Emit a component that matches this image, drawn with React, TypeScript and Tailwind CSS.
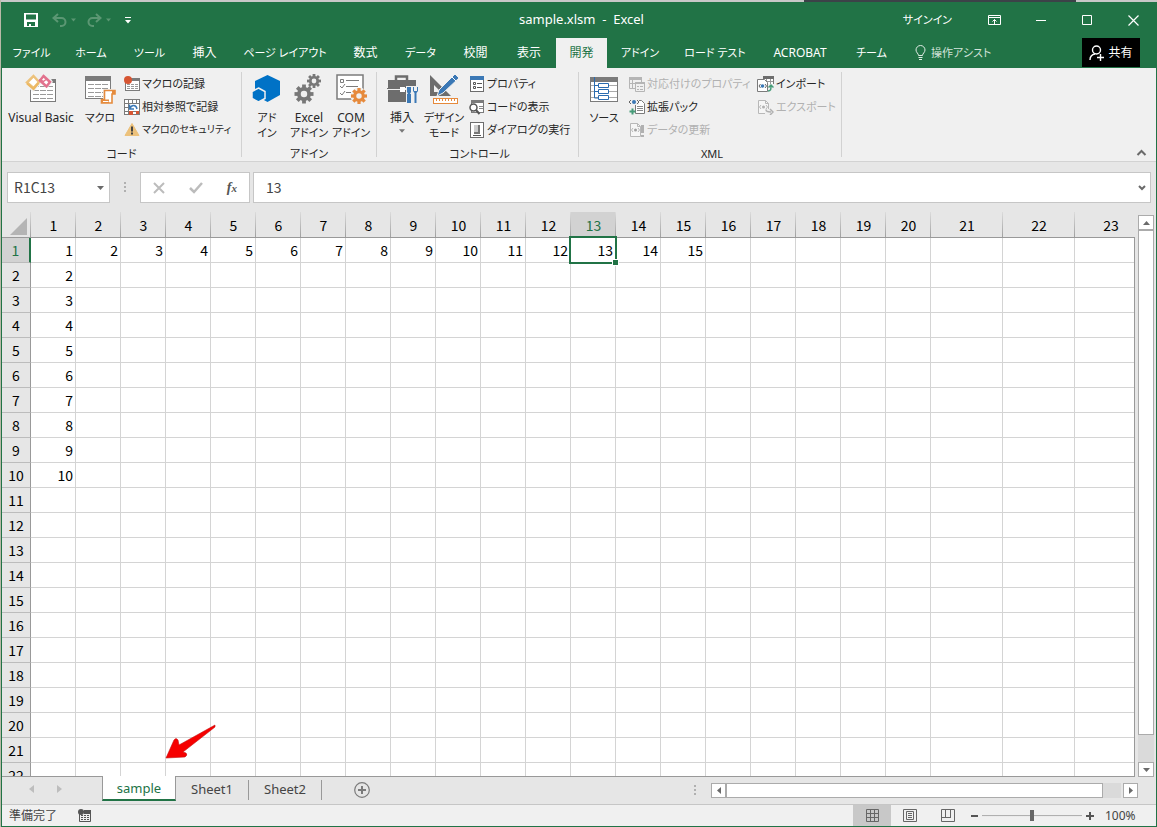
import { useState, type ReactNode } from "react";

type SmallButtonProps = {
  icon: ReactNode;
  label: string;
  disabled?: boolean;
  small?: boolean;
};

type BigButtonProps = {
  icon: ReactNode;
  lines: string[];
  className: string;
  caret?: boolean;
};

const TABS = [
  { label: "ファイル", width: "w-[59px] text-[11px]" },
  { label: "ホーム", width: "w-[60px] text-[11px]" },
  { label: "ツール", width: "w-[57px] text-[11px]" },
  { label: "挿入", width: "w-[53px]" },
  { label: "ページ レイアウト", width: "w-[108px] text-[11px]" },
  { label: "数式", width: "w-[53px]" },
  { label: "データ", width: "w-[57px] text-[11px]" },
  { label: "校閲", width: "w-[53px]" },
  { label: "表示", width: "w-[54px]" },
  { label: "開発", width: "w-[51px]" },
  { label: "アドイン", width: "w-[66px] text-[11px]" },
  { label: "ロード テスト", width: "w-[84px] text-[11px]" },
  { label: "ACROBAT", width: "w-[86px]" },
  { label: "チーム", width: "w-[57px] text-[11px]" },
];

const COLUMNS = Array.from({ length: 23 }, (_, i) => i + 1);
const ROWS = Array.from({ length: 22 }, (_, i) => i + 1);
const SHEETS = ["sample", "Sheet1", "Sheet2"];

function cellValue(row: number, col: number) {
  if (row === 1 && col <= 15) return col;
  if (col === 1 && row <= 10) return row;
  return "";
}

/* ---------- icons ---------- */

function SaveIcon() {
  return (
    <svg width="14" height="14" viewBox="0 0 14 14">
      <path fill="#fff" fillRule="evenodd" d="M0 0h14v14H0zM2 1.500v5h10v-5zM3 9v4h2v-2h2v2h4V9z" />
    </svg>
  );
}

function UndoIcon({ flip }: { flip?: boolean }) {
  return (
    <svg width="15" height="14" viewBox="0 0 15 14" className={flip ? "-scale-x-100" : ""}>
      <path d="M6 1 1.500 5 6 9M2 5h7.500a4 4 0 0 1 0 8H8" fill="none" stroke="#5b9773" strokeWidth="2" />
    </svg>
  );
}

function Caret({ className }: { className: string }) {
  return (
    <svg width="7" height="4" viewBox="0 0 7 4" className={className}>
      <path d="M0 0h7L3.500 4z" fill="currentColor" />
    </svg>
  );
}

function SheetLines({ x, y, w, h, head = 4 }: { x: number; y: number; w: number; h: number; head?: number }) {
  const rows = Math.floor((h - head - 2) / 4);
  return (
    <g>
      <rect x={x + 0.5} y={y + 0.5} width={w - 1} height={h - 1} fill="#fff" stroke="#7b7b7b" />
      <rect x={x} y={y} width={w} height={head} fill="#7b7b7b" />
      {Array.from({ length: rows }, (_, i) => (
        <path
          key={i}
          d={`M${x + 3} ${y + head + 3.5 + i * 4}h${w - 6}`}
          stroke="#9a9a9a"
          strokeDasharray="6 1"
        />
      ))}
    </g>
  );
}

function VisualBasicIcon() {
  return (
    <svg width="32" height="32" viewBox="0 0 32 32">
      <SheetLines x={5} y={5} w={26} h={23} />
      <path d="m8 0 8 7 7-7 5 8-6 6-6-4-8 8-8-7z" fill="#f0f0f0" />
      <path d="m8.500 2 5.500 6-5.500 6L2 8.500z" fill="#fff" stroke="#edc27b" strokeWidth="2.500" />
      <path d="M2 9.500 8.500 15l5-6" stroke="#edb862" strokeWidth="2" fill="none" />
      <path d="m18.500 2 6.500 6-3.500 4.500L15 6.500z" fill="#fff" stroke="#e2728e" strokeWidth="2.500" />
      <path d="m15 6 3.500 1.500 2.500-2" stroke="#e2728e" strokeWidth="1.500" fill="none" />
    </svg>
  );
}

function MacroIcon() {
  return (
    <svg width="32" height="32" viewBox="0 0 32 32">
      <SheetLines x={1} y={2} w={26} h={23} head={5} />
      <path d="M19 15h13v6h-3v10H16v-6h3z" fill="#f0f0f0" />
      <path d="M20.500 16.500H31v3.500h-3v9H17.500v-3.500h3z" fill="#fff" stroke="#e58b3d" strokeWidth="1.600" />
      <path d="M17.500 25.500H25V29h-7.500zM28 16.500h3V20h-3z" fill="#e58b3d" />
      <path d="M19 27.500h5.500" stroke="#fff" />
    </svg>
  );
}

function RecordIcon() {
  return (
    <svg width="16" height="16" viewBox="0 0 16 16">
      <rect x="1.500" y="2.500" width="14" height="12" fill="#fff" stroke="#7b7b7b" />
      <path d="M6 2h10v3H6z" fill="#7b7b7b" />
      <path d="M3 8.500h11M3 10.500h11M3 12.500h11" stroke="#999" strokeDasharray="3 1" />
      <circle cx="4" cy="4" r="4" fill="#d65532" />
    </svg>
  );
}

function RelativeIcon() {
  return (
    <svg width="16" height="16" viewBox="0 0 16 16">
      <rect x=".5" y=".5" width="15" height="15" fill="#fff" stroke="#7b7b7b" />
      <path d="M0 4.500h16M4.500 0v16M8.500 0v4M12.500 0v4M0 8.500h4M0 12.500h16M8.500 12v4" stroke="#7b7b7b" />
      <path d="M5 5h10v7H5z" fill="#fff" />
      <path d="M6 9.500C7 6 12 5 13 10M5.500 5.500v4.500H10" fill="none" stroke="#3b78b5" strokeWidth="1.500" />
      <path d="M5 12h4v4H5zM12 12h3v3h-3z" fill="#d65532" />
    </svg>
  );
}

function WarningIcon() {
  return (
    <svg width="16" height="16" viewBox="0 0 16 16">
      <path d="M8 1.500 15 13.500H1z" fill="#ecc17b" stroke="#ecc17b" strokeLinejoin="round" />
      <path d="M7 4.500h2v5H7zM7 10.500h2v2H7z" fill="#444" />
    </svg>
  );
}

function AddinIcon() {
  return (
    <svg width="32" height="32" viewBox="0 0 32 32">
      <path d="M16.500 1 29 7v14l-12.500 7L4 21V7z" fill="#0072c6" />
      <path d="M7.500 14 14 17.500v7L7.500 28 1 24.500v-7z" fill="#0072c6" stroke="#f0f0f0" strokeWidth="1.500" />
    </svg>
  );
}

function Gear({ cx, cy, r, color }: { cx: number; cy: number; r: number; color: string }) {
  return (
    <g transform={`translate(${cx} ${cy})`} fill={color}>
      {[0, 45, 90, 135].map((deg) => (
        <rect key={deg} x={-r * 0.2} y={-r} width={r * 0.4} height={r * 2} transform={`rotate(${deg})`} />
      ))}
      <circle r={r * 0.73} />
      <circle r={r * 0.34} fill="#f0f0f0" />
    </g>
  );
}

function ExcelAddinIcon() {
  return (
    <svg width="32" height="32" viewBox="0 0 32 32">
      <Gear cx={11} cy={20} r={9.5} color="#787878" />
      <Gear cx={21} cy={7} r={7} color="#787878" />
    </svg>
  );
}

function ComAddinIcon() {
  return (
    <svg width="32" height="32" viewBox="0 0 32 32">
      <rect x="2" y="1" width="26" height="24" fill="#fff" stroke="#7b7b7b" strokeWidth="1.500" />
      <path d="M11 6.500h13M11 12.500h12M11 18.500h5" stroke="#7b7b7b" />
      <path d="M5.500 5.500h3v3h-3zM5 12l2 2 3-4M5 19l2 2 3-4" fill="none" stroke="#7b7b7b" />
      <circle cx="24" cy="22" r="8.500" fill="#f0f0f0" />
      <Gear cx={24} cy={22} r={8} color="#e68a3c" />
    </svg>
  );
}

function ToolboxIcon() {
  return (
    <svg width="32" height="32" viewBox="0 0 32 32">
      <path d="M10 6V2.500h11V6" fill="none" stroke="#6d6d6d" strokeWidth="2.500" />
      <path d="M2 6h28v8H2zM2 16h28v12H2z" fill="#6d6d6d" />
      <path d="M1 14.500h14" stroke="#6d6d6d" />
      <rect x="14" y="13" width="5" height="5" fill="#fff" />
      <path d="M20 12h12v20H20z" fill="#f0f0f0" />
      <path d="M21 13h4v5l-1 2h1v9h-4v-9h1l-1-2z" fill="#3b78b5" />
      <path d="M27 13v4l1.500 2v10h2V19l1.500-2v-4h-1v4h-3v-4z" fill="#3b78b5" />
    </svg>
  );
}

function DesignIcon() {
  return (
    <svg width="32" height="32" viewBox="0 0 32 32">
      <path fill="#6d6d6d" fillRule="evenodd" d="M2 1v21h21zM6 11v7h7z" />
      <path d="m9 22 2-6L27 0l4 4-16 15z" fill="#3b78b5" stroke="#f0f0f0" />
      <path d="m24 3 4 4" stroke="#fff" />
      <rect x="5.500" y="24.500" width="24" height="5" fill="#fff" stroke="#e68a3c" />
      <path d="M8.500 25v2M11.500 25v2M14.500 25v2M17.500 25v2M20.500 25v2M23.500 25v2M26.500 25v2" stroke="#e68a3c" />
    </svg>
  );
}

function PropertyIcon() {
  return (
    <svg width="16" height="16" viewBox="0 0 16 16">
      <rect x="1.500" y=".5" width="13" height="15" fill="#fff" stroke="#6d6d6d" />
      <path d="M1 0h14v4H1z" fill="#3b78b5" />
      <path d="M4.500 6.500h2v2h-2zM4.500 10.500h2v2h-2z" fill="none" stroke="#555" />
      <path d="M8 7.500h5M8 11.500h5" stroke="#555" />
    </svg>
  );
}

function CodeIcon() {
  return (
    <svg width="16" height="16" viewBox="0 0 16 16">
      <rect x="2.500" y="1.500" width="12" height="12" fill="#fff" stroke="#7b7b7b" />
      <path d="M2 1h13v3H2z" fill="#7b7b7b" />
      <path d="M10 7.500h4M10 9.500h4" stroke="#888" />
      <circle cx="4.500" cy="8.500" r="3.500" fill="#fff" stroke="#555" strokeWidth="1.500" />
      <path d="m7 11 3.500 4" stroke="#555" strokeWidth="2" />
    </svg>
  );
}

function DialogIcon() {
  return (
    <svg width="16" height="16" viewBox="0 0 16 16">
      <rect x="1.500" y=".5" width="13" height="15" fill="#fff" stroke="#6d6d6d" />
      <path d="M5 3h6v9H5z" fill="#777" />
      <path d="M5 3h4v7H5z" fill="#ccc" />
      <path d="M4 13.500h8" stroke="#555" />
    </svg>
  );
}

function SourceIcon() {
  return (
    <svg width="32" height="32" viewBox="0 0 32 32">
      <rect x="2.500" y="3.500" width="27" height="24" fill="#fff" stroke="#7b7b7b" />
      <path d="M2 3h28v5H2z" fill="#7b7b7b" />
      <path d="M3 11.500h26M3 17.500h26M3 23.500h26" stroke="#aaa" />
      <path d="M6.500 3v21h4M6.500 11.500h4M6.500 17.500h4" fill="none" stroke="#2b6cb0" />
      <path d="M10.500 9.500h10v4h-10zM10.500 15.500h10v4h-10zM10.500 21.500h10v4h-10z" fill="#fff" stroke="#2b6cb0" />
    </svg>
  );
}

function MapPropIcon() {
  return (
    <svg width="16" height="16" viewBox="0 0 16 16">
      <path d="M.5 1.500h12v11H.5z" fill="#f0f0f0" stroke="#b5b5b5" />
      <path d="M0 1h13v3H0zM6 6h10v3H6z" fill="#b5b5b5" />
      <path d="M3.500 3v10M1 7.500h5" stroke="#b5b5b5" />
      <path d="M6.500 6.500h9v9h-9z" fill="#f0f0f0" stroke="#b5b5b5" />
      <path d="M6 7.500h10M8 10.500h2M11 10.500h3M8 13.500h2M11 13.500h3" stroke="#b5b5b5" />
    </svg>
  );
}

function ExpandIcon() {
  return (
    <svg width="16" height="16" viewBox="0 0 16 16">
      <path d="M6.500 1.500h6l3 3v10h-9z" fill="#fff" stroke="#7b7b7b" />
      <path d="M8 7.500h6M8 9.500h6M8 11.500h6" stroke="#888" />
      <path d="M0 0h10v6H0z" fill="#f0f0f0" />
      <path d="m2 1-2 2 2 2M8 1l2 2-2 2" fill="none" stroke="#666" />
      <circle cx="5" cy="3" r="2" fill="#3b78b5" />
      <path d="M3.500 9.500v6M.5 12.500h6" stroke="#479c79" strokeWidth="2" />
    </svg>
  );
}

function XmlPage({ color, dot }: { color: string; dot: string }) {
  return (
    <g>
      <path d="M1.500 1.500h7l3 3v10h-10z" fill="#f6f6f6" stroke={color} />
      <path d="M8.500 1.500v3h3M4 6 2.500 8 4 10M9 6l1.500 2L9 10" fill="none" stroke={color} />
      <circle cx="6.500" cy="8" r="1.500" fill={dot} />
    </g>
  );
}

function RefreshDataIcon() {
  return (
    <svg width="16" height="16" viewBox="0 0 16 16">
      <XmlPage color="#b8b8b8" dot="#a0a0a0" />
      <path d="M12 3h3v8h-3zM12 13h3v2h-3z" fill="#b0b0b0" />
    </svg>
  );
}

function ImportIcon() {
  return (
    <svg width="17" height="16" viewBox="0 0 17 16">
      <path d="M6.500.5h10v8h-10z" fill="#fff" stroke="#7b7b7b" />
      <path d="M6 0h11v3H6z" fill="#6d6d6d" />
      <path d="M9.500 3v6M13.500 3v6M6 5.500h10" stroke="#999" />
      <path d="M.5 3.500h7l3 3v9H.5z" fill="#fff" stroke="#7b7b7b" />
      <path d="M3.500 8 2 10l1.500 2M8 8l1.500 2L8 12" fill="none" stroke="#666" />
      <circle cx="5.500" cy="10" r="1.800" fill="#3b78b5" />
      <path d="M11 8h6v8h-6z" fill="#f0f0f0" />
      <path d="M11 15c3 0 3-2 3-5M11.500 11.500 14 9l2.500 2.500" fill="none" stroke="#479c79" strokeWidth="1.500" />
    </svg>
  );
}

function ExportIcon() {
  return (
    <svg width="17" height="16" viewBox="0 0 17 16">
      <XmlPage color="#b8b8b8" dot="#b0b0b0" />
      <path d="M8 10h9v6H8z" fill="#f0f0f0" />
      <path d="M9 10.500c0 2 1 2.500 5 2.500M13 10l3 3-3 3" fill="none" stroke="#b0b0b0" strokeWidth="1.500" />
    </svg>
  );
}

/* ---------- ribbon parts ---------- */

function BigButton({ icon, lines, className, caret }: BigButtonProps) {
  return (
    <button type="button" className={`flex h-[72px] shrink-0 flex-col items-center pt-[2px] ${className}`}>
      {icon}
      <span className="mt-1 flex flex-col items-center whitespace-nowrap">
        {lines.map((line) => (
          <span key={line} className={/[A-Za-z挿]/.test(line) ? "text-[12px]" : "text-[11px]"}>
            {line}
          </span>
        ))}
      </span>
      {caret && <Caret className="mt-1 w-[6px] text-[#777]" />}
    </button>
  );
}

function SmallButton({ icon, label, disabled, small }: SmallButtonProps) {
  return (
    <button
      type="button"
      disabled={disabled}
      className={`flex h-[23px] items-center gap-[2px] whitespace-nowrap ${small ? "text-[10px]" : "text-[11px]"} ${
        disabled ? "text-[#b1b1b1]" : ""
      }`}
    >
      {icon}
      <span>{label}</span>
    </button>
  );
}

function RibbonGroup({ title, className, children }: { title: string; className: string; children: ReactNode }) {
  return (
    <section className={`my-1 flex shrink-0 flex-col border-r border-[#d2d2d2] ${className}`}>
      <div className="flex h-[74px] shrink-0">{children}</div>
      <h2 className="h-[15px] shrink-0 text-center text-[11px] leading-[15px]">{title}</h2>
    </section>
  );
}

function Ribbon() {
  return (
    <div className="flex h-[94px] shrink-0 border-b border-[#d2d2d2] bg-[#f0f0f0] leading-[15px] text-[#262626]">
      <RibbonGroup title="コード" className="w-[240px]">
        <BigButton className="w-[78px]" icon={<VisualBasicIcon />} lines={["Visual Basic"]} />
        <BigButton className="w-[40px]" icon={<MacroIcon />} lines={["マクロ"]} />
        <div className="ml-1">
          <SmallButton icon={<RecordIcon />} label="マクロの記録" />
          <SmallButton icon={<RelativeIcon />} label="相対参照で記録" />
          <SmallButton icon={<WarningIcon />} label="マクロのセキュリティ" small />
        </div>
      </RibbonGroup>
      <RibbonGroup title="アドイン" className="w-[135px] px-1">
        <BigButton className="w-[42px]" icon={<AddinIcon />} lines={["アド", "イン"]} />
        <BigButton className="w-[42px]" icon={<ExcelAddinIcon />} lines={["Excel", "アドイン"]} />
        <BigButton className="w-[42px]" icon={<ComAddinIcon />} lines={["COM", "アドイン"]} />
      </RibbonGroup>
      <RibbonGroup title="コントロール" className="w-[202px] pl-1">
        <BigButton className="w-[42px]" icon={<ToolboxIcon />} lines={["挿入"]} caret />
        <BigButton className="w-[42px]" icon={<DesignIcon />} lines={["デザイン", "モード"]} />
        <div className="ml-1">
          <SmallButton icon={<PropertyIcon />} label="プロパティ" />
          <SmallButton icon={<CodeIcon />} label="コードの表示" />
          <SmallButton icon={<DialogIcon />} label="ダイアログの実行" />
        </div>
      </RibbonGroup>
      <RibbonGroup title="XML" className="w-[263px] pl-1">
        <BigButton className="w-[42px]" icon={<SourceIcon />} lines={["ソース"]} />
        <div className="ml-1 w-[128px]">
          <SmallButton icon={<MapPropIcon />} label="対応付けのプロパティ" disabled />
          <SmallButton icon={<ExpandIcon />} label="拡張パック" />
          <SmallButton icon={<RefreshDataIcon />} label="データの更新" disabled />
        </div>
        <div>
          <SmallButton icon={<ImportIcon />} label="インポート" />
          <SmallButton icon={<ExportIcon />} label="エクスポート" disabled />
        </div>
      </RibbonGroup>
      <button type="button" aria-label="collapse" className="mt-auto mr-[9px] mb-1 ml-auto">
        <svg width="11" height="8" viewBox="0 0 11 8">
          <path d="m1.500 6 4-4 4 4" fill="none" stroke="#6a6a6a" strokeWidth="2" />
        </svg>
      </button>
    </div>
  );
}

/* ---------- window parts ---------- */

function TitleBar() {
  return (
    <header className="flex h-9 shrink-0 items-center text-white">
      <div className="flex flex-1 items-center pl-[22px]">
        <button type="button" aria-label="save"><SaveIcon /></button>
        <button type="button" aria-label="undo" className="ml-[14px] flex items-center gap-1">
          <UndoIcon />
          <Caret className="w-[5px] text-[#5b9773]" />
        </button>
        <button type="button" aria-label="redo" className="ml-[11px] flex items-center gap-1">
          <UndoIcon flip />
          <Caret className="w-[5px] text-[#5b9773]" />
        </button>
        <button type="button" aria-label="customize" className="ml-[14px]">
          <svg width="6" height="7" viewBox="0 0 6 7">
            <path d="M0 0h6v1H0zM0 3h6L3 6.500z" fill="#fff" />
          </svg>
        </button>
      </div>
      <h1 className="text-[13px] whitespace-pre">{"sample.xlsm  -  Excel"}</h1>
      <div className="flex flex-1 items-center justify-end pr-[17px]">
        <button type="button" className="mr-9 text-[11px]">サインイン</button>
        <button type="button" aria-label="ribbon options" className="mr-[35px]">
          <svg width="13" height="10" viewBox="0 0 13 10" fill="none" stroke="#fff">
            <path d="M.5.5h12v9H.5zM0 2.500h13M6.500 9V4.500M4.500 6.500l2-2 2 2" />
          </svg>
        </button>
        <button type="button" aria-label="minimize" className="mr-9">
          <svg width="10" height="10" viewBox="0 0 10 10"><path d="M0 5.500h10" stroke="#fff" /></svg>
        </button>
        <button type="button" aria-label="maximize" className="mr-9">
          <svg width="10" height="10" viewBox="0 0 10 10"><path d="M.5.5h9v9h-9z" fill="none" stroke="#fff" /></svg>
        </button>
        <button type="button" aria-label="close">
          <svg width="11" height="11" viewBox="0 0 11 11"><path d="m.5.5 10 10M10.500.5l-10 10" stroke="#fff" strokeWidth="1.200" /></svg>
        </button>
      </div>
    </header>
  );
}

function RibbonTabs() {
  const [active, setActive] = useState("開発");
  return (
    <nav className="flex h-[30px] shrink-0 text-white">
      {TABS.map((tab) => (
        <button
          key={tab.label}
          type="button"
          onClick={() => setActive(tab.label)}
          className={`shrink-0 whitespace-nowrap ${tab.width} ${active === tab.label ? "bg-[#f0f0f0] text-[#217346]" : ""}`}
        >
          {tab.label}
        </button>
      ))}
      <button type="button" className="ml-[14px] flex items-center gap-1 text-[11px] whitespace-nowrap text-[#d3e3da]">
        <svg width="13" height="16" viewBox="0 0 13 16" fill="none" stroke="#e0ece5">
          <path d="M4.500 10.500c0-2-2.500-3-2.500-5.500a4.500 4.500 0 0 1 9 0c0 2.500-2.500 3.500-2.500 5.500zM4.500 12.500h4M5 14.500h3" />
        </svg>
        操作アシスト
      </button>
      <button type="button" className="mr-4 mb-px ml-auto flex w-[58px] items-center justify-center gap-1 bg-black">
        <svg width="15" height="16" viewBox="0 0 15 16" fill="none" stroke="#fff" strokeWidth="1.400">
          <circle cx="7.500" cy="5" r="4" />
          <path d="M1 15c0-3 2-5.500 5-6M8 12.500h7M11.500 9v7" />
        </svg>
        共有
      </button>
    </nav>
  );
}

function FormulaBar() {
  return (
    <div className="flex h-[50px] shrink-0 items-start bg-[#e6e6e6] px-[5px] pt-[10px] font-['Noto_Sans_CJK_JP',sans-serif] text-[#444]">
      <div className="flex h-[31px] w-[103px] items-center border border-[#c6c6c6] bg-white pr-[5px]">
        <input aria-label="name box" defaultValue="R1C13" className="w-full min-w-0 bg-transparent pl-[6px] text-[14px] outline-none" />
        <Caret className="shrink-0 text-[#6a6a6a]" />
      </div>
      <svg width="2" height="31" viewBox="0 0 2 31" className="mx-[14px]">
        <path d="M0 10h2v2H0zM0 14h2v2H0zM0 18h2v2H0z" fill="#b0b0b0" />
      </svg>
      <div className="flex h-[31px] w-[110px] items-center justify-around border border-[#c6c6c6] bg-white">
        <button type="button" aria-label="cancel">
          <svg width="12" height="12" viewBox="0 0 12 12"><path d="m1 1 10 10M11 1 1 11" stroke="#bcbcbc" strokeWidth="2" /></svg>
        </button>
        <button type="button" aria-label="enter">
          <svg width="14" height="12" viewBox="0 0 14 12"><path d="m1 6 4 4 8-9" fill="none" stroke="#bcbcbc" strokeWidth="2.500" /></svg>
        </button>
        <button type="button" className="font-['Liberation_Serif',serif] text-[14px] leading-4 font-bold text-[#555] italic">
          f<span className="text-[11px]">x</span>
        </button>
      </div>
      <div className="ml-[3px] flex h-[31px] flex-1 items-center border border-[#c6c6c6] bg-white pr-1">
        <input aria-label="formula" defaultValue="13" className="w-full min-w-0 bg-transparent pl-3 text-[14px] outline-none" />
        <svg width="8" height="6" viewBox="0 0 8 6" className="shrink-0">
          <path d="m1 1 3 3 3-3" fill="none" stroke="#6a6a6a" strokeWidth="2" />
        </svg>
      </div>
    </div>
  );
}

function Grid() {
  return (
    <div className="relative min-w-0 flex-1 overflow-hidden border-b border-[#999] bg-white">
      <table className="w-[1145px] table-fixed border-separate border-spacing-0 font-['Noto_Sans_CJK_JP',sans-serif] text-[14px] leading-5 text-black">
        <colgroup>
          <col className="w-[29px]" />
          {COLUMNS.map((col) => (
            <col key={col} className={col > 20 ? "w-[72px]" : "w-[45px]"} />
          ))}
        </colgroup>
        <thead>
          <tr>
            <th className="relative h-[26px] border-b border-[#999] bg-[#e6e6e6] p-0">
              <svg width="17" height="17" viewBox="0 0 17 17" className="mt-1 ml-2">
                <path d="M17 0v17H0z" fill="#b4b4b4" />
              </svg>
              <span className="absolute inset-y-0 right-0 w-px bg-linear-to-b from-[#dcdcdc] to-[#a0a0a0]" />
            </th>
            {COLUMNS.map((col) => (
              <th
                key={col}
                className={`relative h-[26px] border-b border-[#999] p-0 font-normal ${col === 13 ? "bg-[#d2d2d2] text-[#217346]" : "bg-[#e6e6e6]"}`}
              >
                {col}
                <span className="absolute inset-y-0 right-0 w-px bg-linear-to-b from-[#dcdcdc] to-[#a0a0a0]" />
              </th>
            ))}
          </tr>
        </thead>
        <tbody>
          {ROWS.map((row) => (
            <tr key={row}>
              <th
                className={`h-[25px] border-r border-b border-b-[#bcbcbc] p-0 font-normal ${
                  row === 1 ? "border-r-2 border-r-[#217346] bg-[#d2d2d2] text-[#217346]" : "border-r-[#999] bg-[#e6e6e6]"
                }`}
              >
                {row}
              </th>
              {COLUMNS.map((col) => (
                <td key={col} className="relative h-[25px] border-r border-b border-[#d4d4d4] p-0 pr-[2px] text-right">
                  {cellValue(row, col)}
                  {row === 1 && col === 13 && (
                    <span className="absolute -top-[2px] -right-[2px] -bottom-[2px] -left-[2px] z-10 border-2 border-[#217346]">
                      <span className="absolute -right-[4px] -bottom-[4px] size-[7px] border border-white bg-[#217346]" />
                    </span>
                  )}
                </td>
              ))}
            </tr>
          ))}
        </tbody>
      </table>
      <div className="absolute top-[25px] right-0 bottom-0 w-px bg-[#999]" />
      <svg width="54" height="40" viewBox="0 0 54 40" className="absolute bottom-[14px] left-[161px]">
        <path d="M52 3 16 23l-1-5q-2-3-4 0L3 36l19-1q3-2 1-4l-3-1L52 5z" fill="#f60000" stroke="#c41010" strokeWidth=".6" />
      </svg>
    </div>
  );
}

function VerticalScroll() {
  return (
    <div className="flex w-[21px] shrink-0 flex-col bg-[#e6e6e6] pt-[3px] pr-[2px] pl-[3px]">
      <button type="button" aria-label="up" className="flex h-[15px] items-center justify-center border border-[#ababab] bg-white">
        <Caret className="rotate-180 text-[#6a6a6a]" />
      </button>
      <div className="flex-1 bg-[#dadada]">
        <div className="h-[95%] border border-[#ababab] bg-white" />
      </div>
      <button type="button" aria-label="down" className="flex h-[15px] items-center justify-center border border-[#ababab] bg-white">
        <Caret className="text-[#6a6a6a]" />
      </button>
    </div>
  );
}

function SheetBar() {
  const [active, setActive] = useState("sample");
  return (
    <div className="flex h-[27px] shrink-0 items-start bg-[#e6e6e6] text-[#444]">
      <div className="flex w-[100px] gap-[23px] pt-2 pl-[27px]">
        <button type="button" aria-label="previous">
          <svg width="5" height="8" viewBox="0 0 5 8"><path d="M5 0v8L0 4z" fill="#bdbdbd" /></svg>
        </button>
        <button type="button" aria-label="next">
          <svg width="5" height="8" viewBox="0 0 5 8"><path d="M0 0v8l5-4z" fill="#bdbdbd" /></svg>
        </button>
      </div>
      {SHEETS.map((sheet) =>
        sheet === active ? (
          <button
            key={sheet}
            type="button"
            className="relative -mt-px h-[25px] w-[74px] border-x border-b-2 border-x-[#999] border-b-[#217346] bg-white pt-[2px] text-[13px] text-[#217346]"
          >
            {sheet}
          </button>
        ) : (
          <button key={sheet} type="button" onClick={() => setActive(sheet)} className="flex h-[25px] w-[73px] items-center text-[13px]">
            <span className="flex-1 text-center">{sheet}</span>
            <span className="h-5 w-px bg-[#999]" />
          </button>
        )
      )}
      <button type="button" aria-label="new sheet" className="mt-[5px] ml-8">
        <svg width="16" height="16" viewBox="0 0 16 16" fill="none" stroke="#7b7b7b">
          <circle cx="8" cy="8" r="7.300" strokeWidth="1.200" />
          <path d="M8 4v8M4 8h8" strokeWidth="2" />
        </svg>
      </button>
      <svg width="2" height="10" viewBox="0 0 2 10" className="mt-2 mr-[15px] ml-auto">
        <path d="M0 0h2v2H0zM0 4h2v2H0zM0 8h2v2H0z" fill="#b0b0b0" />
      </svg>
      <div className="mt-[6px] mr-[18px] flex h-[15px] w-[427px]">
        <button type="button" aria-label="left" className="flex w-[15px] items-center justify-center border border-[#ababab] bg-white">
          <svg width="4" height="7" viewBox="0 0 4 7"><path d="M4 0v7L0 3.500z" fill="#6a6a6a" /></svg>
        </button>
        <div className="mr-[2px] flex-1 bg-[#dadada] pr-[18px]">
          <div className="h-full border border-[#ababab] bg-white" />
        </div>
        <button type="button" aria-label="right" className="flex w-[15px] items-center justify-center border border-[#ababab] bg-white">
          <svg width="4" height="7" viewBox="0 0 4 7"><path d="M0 0v7l4-3.500z" fill="#6a6a6a" /></svg>
        </button>
      </div>
    </div>
  );
}

function StatusBar() {
  return (
    <footer className="flex h-[22px] shrink-0 items-center border-t border-[#c6c6c6] bg-[#f0f0f0] text-[#444]">
      <span className="ml-[7px] w-[69px]">準備完了</span>
      <svg width="13" height="13" viewBox="0 0 13 13">
        <path d="M1.500 2.500h11v10h-11z" fill="#f0f0f0" stroke="#555" />
        <path d="M6 1h7v4H6z" fill="#555" />
        <path d="M3 6.500h8M3 8.500h8M3 10.500h8" stroke="#555" strokeDasharray="2 1" />
        <circle cx="3" cy="3" r="3" fill="#555" />
      </svg>
      <button type="button" aria-label="normal view" className="ml-auto flex h-full w-[38px] items-center justify-center bg-[#c8c8c8]">
        <svg width="13" height="13" viewBox="0 0 13 13" fill="none" stroke="#666">
          <path d="M.5.5h12v12H.5zM4.500 0v13M8.500 0v13M0 4.500h13M0 8.500h13" />
        </svg>
      </button>
      <button type="button" aria-label="page layout" className="flex w-[38px] justify-center">
        <svg width="14" height="13" viewBox="0 0 14 13" fill="none" stroke="#666">
          <path d="M.5.5h13v12H.5zM3.500 2.500h7v8h-7zM5 4.500h4M5 6.500h4M5 8.500h4" />
        </svg>
      </button>
      <button type="button" aria-label="page break" className="flex w-[38px] justify-center">
        <svg width="14" height="13" viewBox="0 0 14 13" fill="none" stroke="#666">
          <path d="M.5.5h13v12H.5zM4.500 0v8M9.500 0v8M0 8.500h10" />
        </svg>
      </button>
      <button type="button" aria-label="zoom out" className="ml-1">
        <svg width="7" height="8" viewBox="0 0 7 8"><path d="M0 4h7" stroke="#555" strokeWidth="2" /></svg>
      </button>
      <input
        type="range"
        aria-label="zoom"
        defaultValue={50}
        className="mx-1 h-3 w-[100px] appearance-none bg-linear-to-b from-transparent from-45% via-[#aaa] via-45% to-transparent to-55% [&::-webkit-slider-thumb]:h-[11px] [&::-webkit-slider-thumb]:w-1 [&::-webkit-slider-thumb]:appearance-none [&::-webkit-slider-thumb]:bg-[#666]"
      />
      <button type="button" aria-label="zoom in">
        <svg width="8" height="8" viewBox="0 0 8 8"><path d="M0 4h8M4 0v8" stroke="#555" strokeWidth="2" /></svg>
      </button>
      <span className="mr-[17px] ml-[11px] w-[34px]">100%</span>
    </footer>
  );
}

export default function App() {
  return (
    <div className="flex h-screen flex-col overflow-hidden bg-[#b9b9a8] pl-px font-['Noto_Sans','Noto_Sans_CJK_JP',sans-serif] text-[12px] [font-feature-settings:'palt']">
      <div className="flex h-[2px] shrink-0 bg-[#c8c8c8]">
        <div className="ml-[803px] w-[272px] bg-[#3c4248]" />
      </div>
      <div className="flex min-h-0 flex-1 flex-col border-x border-b border-[#217346] bg-[#217346]">
        <TitleBar />
        <RibbonTabs />
        <Ribbon />
        <FormulaBar />
        <main className="flex min-h-0 flex-1">
          <Grid />
          <VerticalScroll />
        </main>
        <SheetBar />
        <StatusBar />
      </div>
    </div>
  );
}
